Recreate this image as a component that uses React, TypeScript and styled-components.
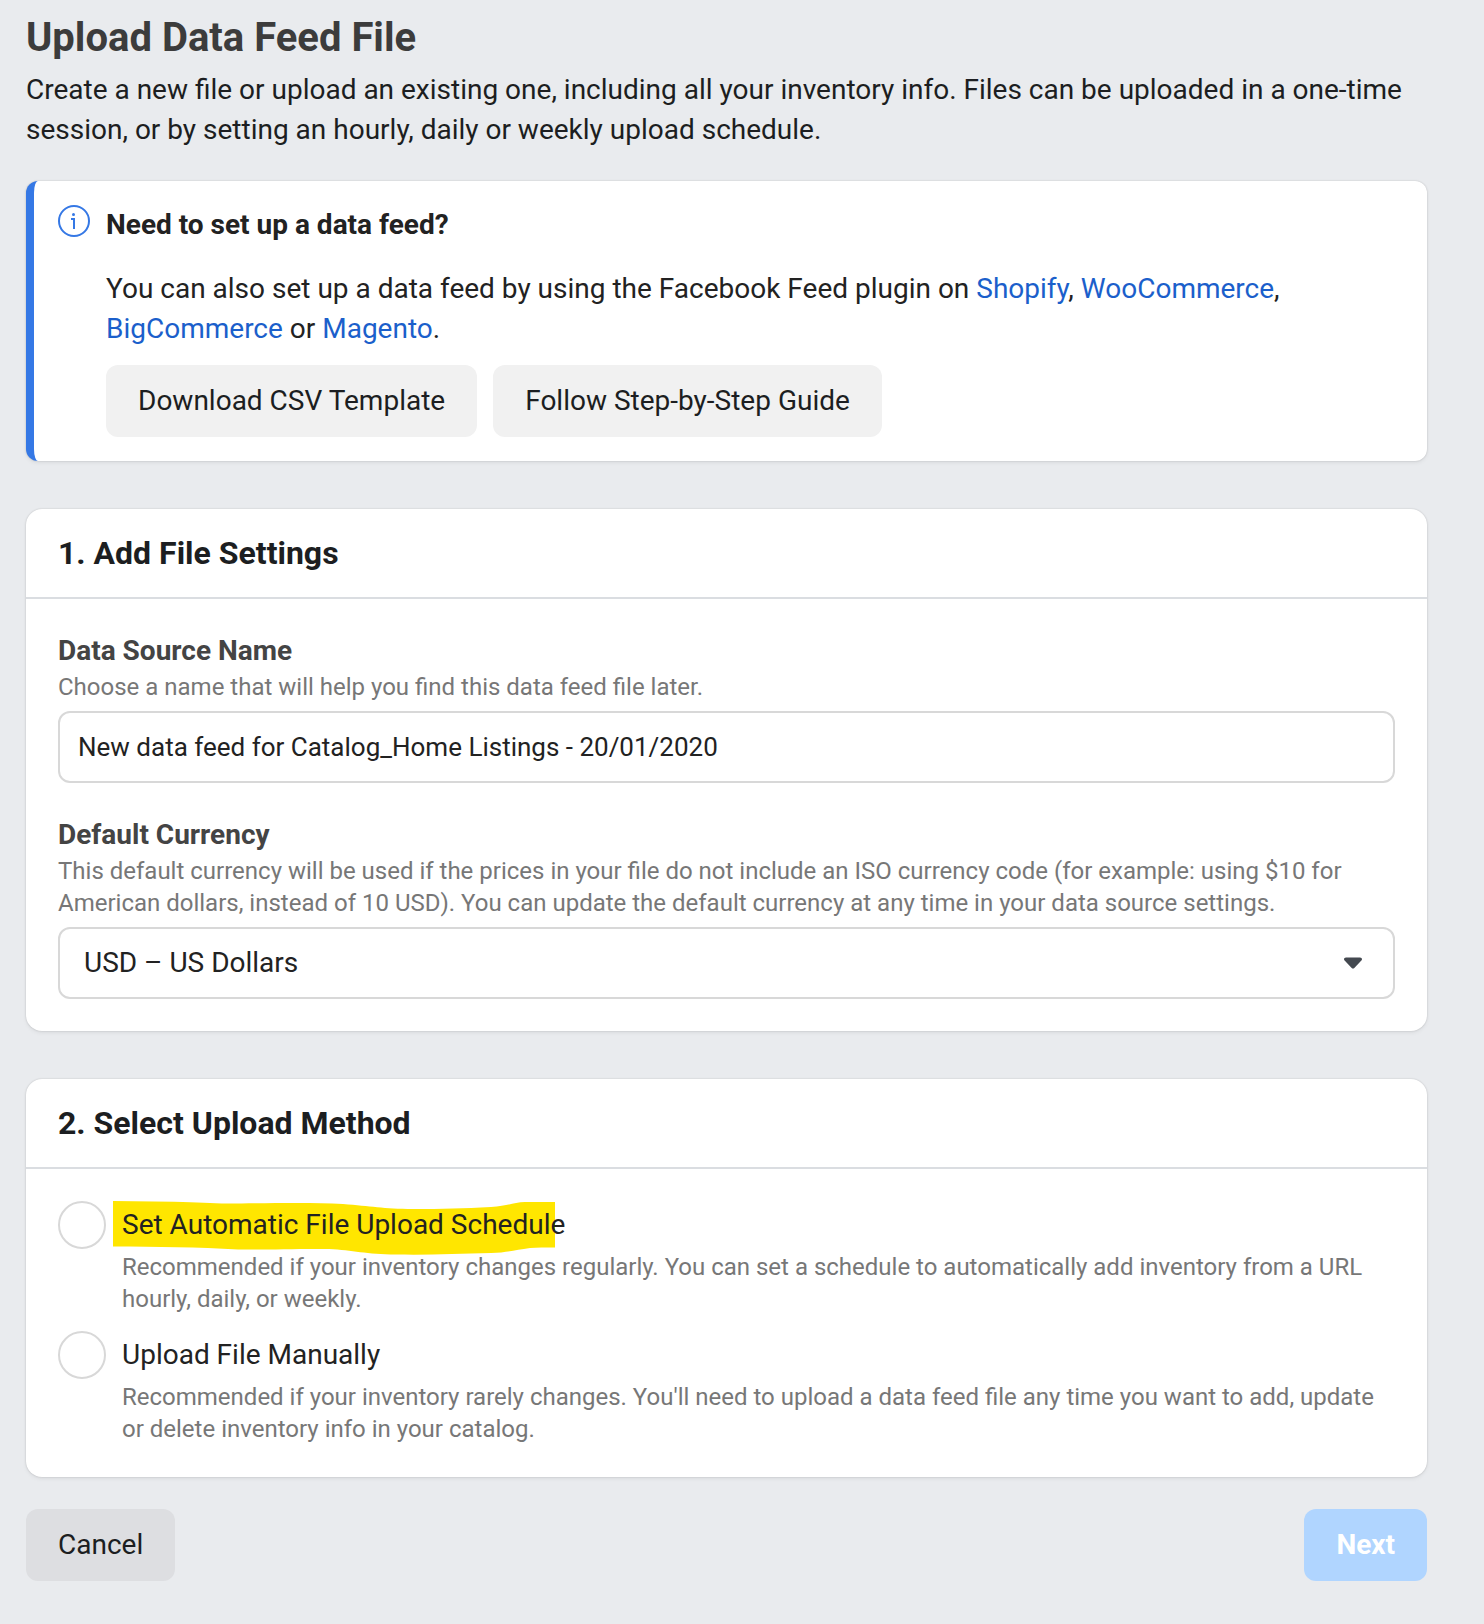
import React, { useState } from "react";
import styled, { createGlobalStyle } from "styled-components";

const GlobalStyle = createGlobalStyle`
  *, *::before, *::after { box-sizing: border-box; }
  body {
    margin: 0;
    background: #e9ebee;
    color: #1d2129;
    font-family: Roboto, "Liberation Sans", sans-serif;
    font-size: 28px;
    line-height: 40px;
  }
  html { background: #e9ebee; }
  button, input, select { font: inherit; color: inherit; margin: 0; }
`;

const Page = styled.main`
  padding: 14px 57px 43px 26px;
`;

const PageTitle = styled.h1`
  margin: 0 0 8px;
  font-size: 40px;
  line-height: 48px;
  font-weight: 700;
  color: #3c3c3c;
`;

const Intro = styled.p`
  margin: 0 0 31px;
  color: #1c1e21;
`;

const cardShadow = "0 0 2px rgba(0, 0, 0, 0.18), 0 2px 4px rgba(0, 0, 0, 0.06)";

const Notice = styled.section`
  display: flex;
  gap: 16px;
  padding: 24px;
  border-left: 8px solid #3578e5;
  border-radius: 12px;
  background: #fff;
  box-shadow: ${cardShadow};
`;

const InfoIcon = styled.svg`
  flex: none;
  width: 32px;
  height: 32px;
`;

const NoticeBody = styled.div`
  flex: 1;
  min-width: 0;
`;

const NoticeTitle = styled.h2`
  margin: 0 0 24px;
  font-size: 28px;
  line-height: 40px;
  font-weight: 700;
  color: #222;
`;

const NoticeText = styled.p`
  margin: 0 0 16px;
  color: #222;
`;

const TextLink = styled.a`
  color: #1b5fcb;
  text-decoration: none;
`;

const ButtonRow = styled.div<{ $spread?: boolean }>`
  display: flex;
  flex-wrap: wrap;
  gap: 16px;
  justify-content: ${(p) => (p.$spread ? "space-between" : "flex-start")};
`;

const tones = {
  light: { background: "#f1f1f1", color: "#1c1e21", weight: 400 },
  grey: { background: "#dddee1", color: "#1c1e21", weight: 400 },
  primary: { background: "#b0d5ff", color: "#fff", weight: 700 },
};

const Button = styled.button<{ $tone: keyof typeof tones }>`
  height: 72px;
  padding: 0 32px;
  border: 0;
  border-radius: 12px;
  white-space: nowrap;
  background: ${(p) => tones[p.$tone].background};
  color: ${(p) => tones[p.$tone].color};
  font-weight: ${(p) => tones[p.$tone].weight};
`;

const Card = styled.section`
  margin-top: 48px;
  border-radius: 16px;
  background: #fff;
  box-shadow: ${cardShadow};
`;

const CardHeader = styled.header`
  padding: 24px 32px;
  border-bottom: 2px solid #dadde1;
`;

const CardTitle = styled.h2`
  margin: 0;
  font-size: 32px;
  line-height: 40px;
  font-weight: 700;
  color: #1c1e21;
`;

const CardBody = styled.div<{ $gap: number }>`
  display: flex;
  flex-direction: column;
  gap: ${(p) => p.$gap}px;
  padding: 32px;
`;

const FieldLabel = styled.label`
  display: block;
  font-weight: 700;
  color: #444;
`;

const Helper = styled.p`
  margin: 0;
  font-size: 24px;
  line-height: 32px;
  color: #777;
`;

const Field = styled.div`
  ${Helper} { margin-bottom: 8px; }
`;

const TextInput = styled.input`
  display: block;
  width: 100%;
  height: 72px;
  padding: 0 18px;
  border: 2px solid #d8d8d8;
  border-radius: 12px;
  background: #fff;
  color: #222;
  font-size: 26px;
`;

const SelectWrap = styled.div`
  display: grid;
  align-items: center;
  > * { grid-area: 1 / 1; }
`;

const Select = styled.select`
  width: 100%;
  height: 72px;
  padding: 0 72px 0 24px;
  border: 2px solid #d8d8d8;
  border-radius: 12px;
  background: #fff;
  color: #222;
  appearance: none;
`;

const Caret = styled.svg`
  justify-self: end;
  width: 18px;
  height: 12px;
  margin-right: 33px;
  pointer-events: none;
`;

const Option = styled.div`
  display: grid;
  grid-template-columns: 48px 1fr;
  column-gap: 16px;
  row-gap: 2px;
  ${Helper} { grid-column: 2; }
`;

const Radio = styled.input`
  appearance: none;
  width: 48px;
  height: 48px;
  margin: 0;
  border: 2px solid #d8d8d8;
  border-radius: 50%;
  background: #fff;
  &:checked { border: 14px solid #3578e5; }
`;

const OptionLabel = styled.label`
  position: relative;
  justify-self: start;
  line-height: 48px;
  color: #222;
`;

const OptionText = styled.span`
  position: relative;
`;

const Marker = styled.svg`
  position: absolute;
  top: 0;
  left: -9px;
  width: 442px;
  height: 54px;
`;

const Footer = styled.footer`
  margin-top: 32px;
`;

const methods = [
  {
    id: "schedule",
    title: "Set Automatic File Upload Schedule",
    text: "Recommended if your inventory changes regularly. You can set a schedule to automatically add inventory from a URL hourly, daily, or weekly.",
    marked: true,
  },
  {
    id: "manual",
    title: "Upload File Manually",
    text: "Recommended if your inventory rarely changes. You'll need to upload a data feed file any time you want to add, update or delete inventory info in your catalog.",
    marked: false,
  },
];

export default function App() {
  const [name, setName] = useState("New data feed for Catalog_Home Listings - 20/01/2020");
  const [method, setMethod] = useState("");

  return (
    <>
      <GlobalStyle />
      <Page>
        <PageTitle>Upload Data Feed File</PageTitle>
        <Intro>
          Create a new file or upload an existing one, including all your inventory info. Files can
          be uploaded in a one-time session, or by setting an hourly, daily or weekly upload schedule.
        </Intro>

        <Notice>
          <InfoIcon viewBox="0 0 32 32" fill="none" stroke="#3578e5" aria-hidden="true">
            <circle cx="16" cy="16" r="15" strokeWidth="2" />
            <path d="M13 14H16V24" strokeWidth="2" />
            <circle cx="15.5" cy="9.5" r="1.5" fill="#3578e5" stroke="none" />
          </InfoIcon>
          <NoticeBody>
            <NoticeTitle>Need to set up a data feed?</NoticeTitle>
            <NoticeText>
              You can also set up a data feed by using the Facebook Feed plugin on{" "}
              <TextLink href="#shopify">Shopify</TextLink>,{" "}
              <TextLink href="#woocommerce">WooCommerce</TextLink>,{" "}
              <TextLink href="#bigcommerce">BigCommerce</TextLink> or{" "}
              <TextLink href="#magento">Magento</TextLink>.
            </NoticeText>
            <ButtonRow>
              <Button type="button" $tone="light">Download CSV Template</Button>
              <Button type="button" $tone="light">Follow Step-by-Step Guide</Button>
            </ButtonRow>
          </NoticeBody>
        </Notice>

        <Card>
          <CardHeader>
            <CardTitle>1. Add File Settings</CardTitle>
          </CardHeader>
          <CardBody $gap={32}>
            <Field>
              <FieldLabel htmlFor="source-name">Data Source Name</FieldLabel>
              <Helper>Choose a name that will help you find this data feed file later.</Helper>
              <TextInput
                id="source-name"
                type="text"
                value={name}
                onChange={(e) => setName(e.target.value)}
              />
            </Field>
            <Field>
              <FieldLabel htmlFor="currency">Default Currency</FieldLabel>
              <Helper>
                This default currency will be used if the prices in your file do not include an ISO
                currency code (for example: using $10 for American dollars, instead of 10 USD). You
                can update the default currency at any time in your data source settings.
              </Helper>
              <SelectWrap>
                <Select id="currency" defaultValue="USD">
                  <option value="USD">USD – US Dollars</option>
                </Select>
                <Caret viewBox="0 0 18 12" aria-hidden="true">
                  <path
                    d="M2 0.5H16C17.8 0.5 18.6 2.4 17.4 3.6L10.3 10.9C9.6 11.7 8.4 11.7 7.7 10.9L0.6 3.6C-0.6 2.4 0.2 0.5 2 0.5Z"
                    fill="#444950"
                  />
                </Caret>
              </SelectWrap>
            </Field>
          </CardBody>
        </Card>

        <Card>
          <CardHeader>
            <CardTitle>2. Select Upload Method</CardTitle>
          </CardHeader>
          <CardBody $gap={16}>
            {methods.map((m) => (
              <Option key={m.id}>
                <Radio
                  type="radio"
                  name="method"
                  id={m.id}
                  checked={method === m.id}
                  onChange={() => setMethod(m.id)}
                />
                <OptionLabel htmlFor={m.id}>
                  {m.marked && (
                    <Marker viewBox="0 0 442 54" aria-hidden="true">
                      <path
                        d="M0 0L61 0.7C85 1 98 2.3 115 2.5C150 2.5 195 1 230 3C258 5 270 8 300 8C330 8 350 7.500 378 6C394 5 400 1.500 412 1H442V46.500C432 46.500 424 46 417 47C402 49 394 51.500 378 52C345 53 315 54 283 53.500C253 53.500 240 49 216 48C185 47.500 150 49 125 48.500C85 46 45 46 0 45.500Z"
                        fill="#ffe600"
                      />
                    </Marker>
                  )}
                  <OptionText>{m.title}</OptionText>
                </OptionLabel>
                <Helper>{m.text}</Helper>
              </Option>
            ))}
          </CardBody>
        </Card>

        <Footer>
          <ButtonRow $spread>
            <Button type="button" $tone="grey">Cancel</Button>
            <Button type="button" $tone="primary" disabled>Next</Button>
          </ButtonRow>
        </Footer>
      </Page>
    </>
  );
}
